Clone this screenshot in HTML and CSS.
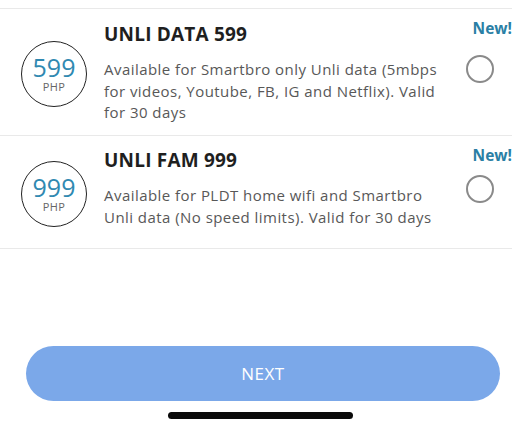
FILE: index.html
```html
<!DOCTYPE html>
<html>
<head>
<meta charset="utf-8">
<link rel="stylesheet" href="styles.css">
</head>
<body>
<div class="screen">
  <div class="list">
    <div class="item item-1">
      <div class="price">
        <span class="amount">599</span>
        <span class="cur">PHP</span>
      </div>
      <div class="info">
        <div class="title">UNLI DATA 599</div>
        <div class="desc">Available for Smartbro only Unli data (5mbps for videos, Youtube, FB, IG and Netflix). Valid for 30 days</div>
      </div>
      <div class="pick"><span class="radio"></span></div>
      <span class="badge">New!</span>
    </div>
    <div class="item item-2">
      <div class="price">
        <span class="amount">999</span>
        <span class="cur">PHP</span>
      </div>
      <div class="info">
        <div class="title">UNLI FAM 999</div>
        <div class="desc">Available for PLDT home wifi and Smartbro Unli data (No speed limits). Valid for 30 days</div>
      </div>
      <div class="pick"><span class="radio"></span></div>
      <span class="badge">New!</span>
    </div>
  </div>
  <div class="footer">
    <button class="next">NEXT</button>
    <div class="home-bar"></div>
  </div>
</div>
</body>
</html>
```
FILE: styles.css
```css
html, body {
  margin: 0;
  padding: 0;
  background: #ffffff;
}
body {
  font-family: "Open Sans", "Liberation Sans", sans-serif;
  width: 512px;
  height: 429px;
  overflow: hidden;
}
.screen {
  display: flex;
  flex-direction: column;
  height: 429px;
}
.list {
  padding-top: 9px;
}
.item {
  position: relative;
  display: flex;
  align-items: center;
  border-top: 1px solid #e9e9e9;
  border-bottom: 1px solid #e9e9e9;
  margin-top: -1px;
  box-sizing: border-box;
}
.item-1 {
  height: 128px;
  padding: 0 0 0 21px;
}
.item-2 {
  height: 114px;
  padding: 0 0 0 21px;
}
.price {
  width: 64px;
  height: 64px;
  border: 1px solid #222;
  border-radius: 50%;
  display: flex;
  flex-direction: column;
  align-items: center;
  justify-content: center;
  flex-shrink: 0;
  margin-right: 17px;
  margin-top: 3px;
}
.amount {
  color: #3089b1;
  font-size: 25px;
  line-height: 26px;
  font-weight: 400;
}
.cur {
  color: #666;
  font-size: 11px;
  line-height: 13px;
  letter-spacing: 0.4px;
}
.info {
  align-self: flex-start;
  width: 336px;
}
.item-1 .info { padding-top: 13px; }
.item-2 .info { padding-top: 12px; }
.title {
  font-size: 19px;
  line-height: 24px;
  font-weight: 700;
  color: #1f1f1f;
  letter-spacing: 0.2px;
}
.desc {
  margin-top: 13px;
  font-size: 15px;
  line-height: 21.5px;
  color: #585858;
  letter-spacing: 0.45px;
}
.pick {
  flex: 1;
  display: flex;
  justify-content: flex-end;
  padding-right: 18px;
  margin-bottom: 6px;
}
.radio {
  width: 24px;
  height: 24px;
  border: 2px solid #8a8a8a;
  border-radius: 50%;
}
.badge {
  position: absolute;
  right: 0;
  top: 9px;
  font-size: 15.5px;
  font-weight: 700;
  color: #2a7fa5;
  line-height: 20px;
}
.footer {
  margin-top: auto;
  display: flex;
  flex-direction: column;
  align-items: center;
  padding-bottom: 10px;
}
.next {
  width: 474px;
  height: 55px;
  margin-left: 14px;
  border: none;
  border-radius: 28px;
  background: #7ba8e9;
  color: #ffffff;
  font-family: "Open Sans", "Liberation Sans", sans-serif;
  font-size: 17px;
  letter-spacing: 0.5px;
  padding: 0;
}
.home-bar {
  width: 185px;
  height: 7px;
  border-radius: 4px;
  background: #0a0a0a;
  margin-top: 11px;
  margin-left: 8px;
}
```
